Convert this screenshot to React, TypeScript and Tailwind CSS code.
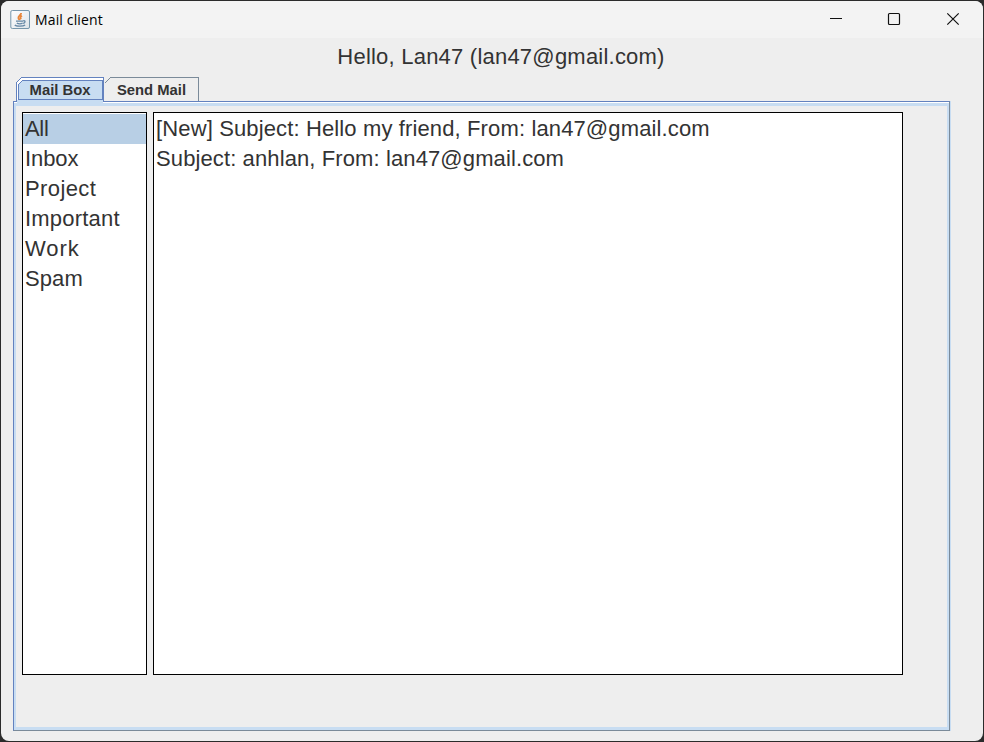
type Item = { text: string; spacing: string };

const folders: Item[] = [
  { text: "All", spacing: "tracking-[-0.3px]" },
  { text: "Inbox", spacing: "tracking-[-0.1px]" },
  { text: "Project", spacing: "tracking-[0.4px]" },
  { text: "Important", spacing: "tracking-[0.2px]" },
  { text: "Work", spacing: "tracking-[0.9px]" },
  { text: "Spam", spacing: "tracking-[0.1px]" },
];
const mails: Item[] = [
  { text: "[New] Subject: Hello my friend, From: lan47@gmail.com", spacing: "tracking-[0.13px]" },
  { text: "Subject: anhlan, From: lan47@gmail.com", spacing: "tracking-[0.11px]" },
];

function JavaIcon() {
  return (
    <svg width="20" height="20" viewBox="0 0 20 20">
      <defs>
        <linearGradient id="tile" x1="0" y1="0" x2="1" y2="1">
          <stop offset="0" stopColor="#fff" />
          <stop offset="1" stopColor="#dce3e8" />
        </linearGradient>
      </defs>
      <rect x="0.8" y="0.5" width="18.7" height="18" rx="1.5" fill="url(#tile)" stroke="#7696ab" />
      <path d="M11.2 3C11.2 5 7.7 6 8.4 8C8.6 9 9.4 9.5 9.4 10.2M12 5.8C9.9 7 10.2 8 11.1 9.2" fill="none" stroke="#e8863a" strokeWidth="1.8" />
      <path d="M6 11.2H13M6.8 13.2C8.5 13.9 11.3 13.8 12.6 13.2M13.2 10.8C15.6 10.3 15.6 12.7 13.1 13.4M4.8 15C6 16.5 13.3 16.5 15.1 15" fill="none" stroke="#6487a5" strokeWidth="1.3" />
    </svg>
  );
}

function TitleBar() {
  return (
    <header className="flex h-[37px] shrink-0 items-center bg-[#f3f3f3] pl-[9px]">
      <JavaIcon />
      <span className="ml-[5px] font-['Open_Sans',sans-serif] text-[14px] leading-[18px] tracking-[0.15px] text-black">Mail client</span>
      <div className="ml-auto flex h-full items-center">
        <svg width="168" height="37" viewBox="815 1 168 37" fill="none" stroke="#111">
          <path d="M830 18.5H842" />
          <rect x="888.5" y="13.5" width="11" height="11" rx="1" strokeWidth="1.2" />
          <path d="M947.3 13.3L958.7 24.7M958.7 13.3L947.3 24.7" strokeWidth="1.2" />
        </svg>
      </div>
    </header>
  );
}

function Tabs() {
  return (
    <div className="relative z-10 flex h-6 pl-[15px] font-['Liberation_Sans',Arial,sans-serif] text-[14.8px] font-bold leading-[26px]">
      <button className="relative h-6 w-[88px]">
        <svg className="absolute left-0 top-0" width="88" height="26" viewBox="16 77 88 26" fill="none" shapeRendering="crispEdges">
          <path d="M16.5 101V82.5L21.5 77.5H103.5V101" fill="#fff" stroke="#6382bf" />
          <path d="M17 100H103V103H17Z" fill="#c8ddf2" />
          <path d="M18.5 99.5V84.5L22.5 80.5H102.5V99.5Z" fill="#c8ddf2" stroke="#6382bf" />
        </svg>
        <span className="relative block">Mail Box</span>
      </button>
      <button className="relative h-6 w-[95px]">
        <svg className="absolute left-0 top-0" width="95" height="24" viewBox="104 77 95 24" fill="none" shapeRendering="crispEdges">
          <path d="M104.5 83.5L110.5 77.5H198.5V101" stroke="#7a8a99" />
        </svg>
        <span className="relative block">Send Mail</span>
      </button>
    </div>
  );
}

function ItemList({ items, selected, className }: { items: Item[]; selected?: number; className: string }) {
  return (
    <ul className={`border border-black bg-white pt-px ${className}`}>
      {items.map((item, i) => (
        <li key={item.text} className={`h-[30px] whitespace-nowrap pl-[2px] ${item.spacing} ${i === selected ? "bg-[#b8cfe5]" : ""}`}>
          {item.text}
        </li>
      ))}
    </ul>
  );
}

export default function App() {
  return (
    <div className="h-[742px] w-[984px] overflow-hidden bg-[#2b2b2b] p-px font-['Liberation_Sans',Arial,sans-serif] text-[#333]">
      <div className="flex h-[740px] w-[982px] flex-col overflow-hidden rounded-lg bg-[#eee]">
        <TitleBar />
        <h1 className="h-[39px] pl-[18px] text-center text-[22px] leading-[38px] tracking-[0.22px]">Hello, Lan47 (lan47@gmail.com)</h1>
        <Tabs />
        <main className="ml-3 h-[630px] w-[938px] border-r border-[#c8ddf2]">
          <div className="h-full border border-[#6382bf] border-b-[#7a8a99] border-r-[#7a8a99]">
            <div className="h-full border-t border-white">
              <div className="flex h-full gap-[6px] border-2 border-y-[3px] border-[#c8ddf2] pl-[6px] pt-[6px] text-[22px] leading-[30px]">
                <ItemList items={folders} selected={0} className="h-[563px] w-[125px]" />
                <ItemList items={mails} className="h-[563px] w-[750px]" />
              </div>
            </div>
          </div>
        </main>
      </div>
    </div>
  );
}
